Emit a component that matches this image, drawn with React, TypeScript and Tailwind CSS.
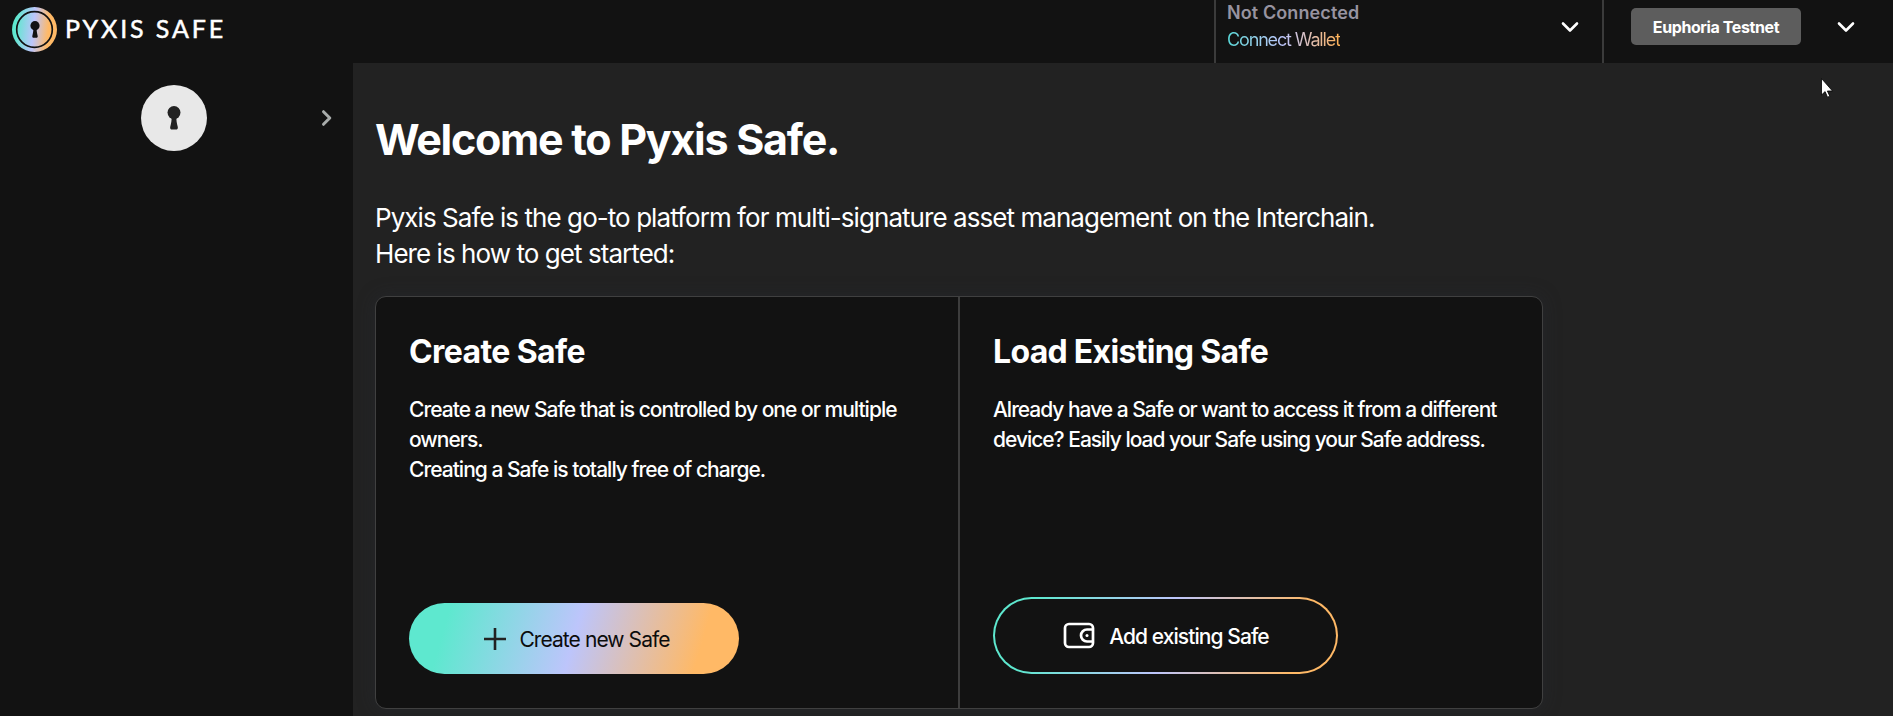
function Keyhole({ className }: { className: string }) {
  return (
    <svg viewBox="0 0 14 24" className={className} fill="currentColor">
      <circle cx="7" cy="6.6" r="6.5" />
      <path d="M4.6 10h4.8c-.2 4.500.4 7 1.400 11 .3 1.600-.5 2.600-2 2.600H5.200c-1.500 0-2.300-1-2-2.600C4.200 17 4.800 14.500 4.600 10z" />
    </svg>
  );
}

function ChevronDown() {
  return (
    <svg viewBox="0 0 18 12" className="h-3 w-[18px] shrink-0" fill="none" stroke="#fff" strokeWidth="2.6" strokeLinecap="round" strokeLinejoin="round">
      <path d="M2 2.500l7 7L16 2.500" />
    </svg>
  );
}

function Logo() {
  return (
    <svg viewBox="0 0 46 46" className="size-[45px] shrink-0">
      <defs>
        <linearGradient id="logo" x1="0" y1="0" x2="1" y2="0.1">
          <stop offset="0.12" stopColor="#5ee8cf" />
          <stop offset="0.52" stopColor="#bdc5fb" />
          <stop offset="0.85" stopColor="#ffb966" />
        </linearGradient>
      </defs>
      <circle cx="23" cy="23" r="23" fill="url(#logo)" />
      <circle cx="23" cy="23" r="18.200" fill="none" stroke="#121212" strokeWidth="1.700" />
    </svg>
  );
}

function Header() {
  return (
    <header className="flex h-[63px] bg-[#121212]">
      <div className="flex min-w-0 flex-1 items-start pl-3 pt-[7px]">
        <div className="grid place-items-center *:col-start-1 *:row-start-1">
          <Logo />
          <Keyhole className="h-[17px] w-[10px] text-[#121212]" />
        </div>
        <span className="ml-2 mt-[6px] whitespace-nowrap font-[Lato] text-[25px] leading-[30px] tracking-[2.9px] [-webkit-text-stroke:0.5px_white]">PYXIS SAFE</span>
      </div>
      <div className="flex w-[388px] justify-between border-l-2 border-[#3b3b3b] pl-[11px] pr-[23px]">
        <div className="-mt-px whitespace-nowrap">
          <p className="text-[18px] font-semibold leading-[27px] tracking-[0.1px] text-[#9793a0]">Not Connected</p>
          <p className="w-fit bg-linear-to-r from-[#55d8d8] via-[#bdc5fb] to-[#ffb04f] bg-clip-text text-[18px] font-normal leading-[27px] tracking-[-1.150px] text-transparent">Connect Wallet</p>
        </div>
        <div className="pt-[21px]"><ChevronDown /></div>
      </div>
      <div className="flex w-[291px] items-start border-l-2 border-[#3b3b3b] pl-[27px] pt-2">
        <div className="flex h-[37px] w-[170px] items-center justify-center rounded-[5px] bg-[#5d5d5d] pt-px text-[16px] font-bold tracking-[-0.4px]">Euphoria Testnet</div>
        <div className="ml-[36px] mt-[13px]"><ChevronDown /></div>
      </div>
    </header>
  );
}

function WalletIcon() {
  return (
    <svg viewBox="0 0 32 28" className="h-7 w-8 shrink-0" fill="none" stroke="#fff" strokeWidth="2.700">
      <rect x="2" y="2" width="28" height="23" rx="4" />
      <path d="M30 7.500h-6a6 6 0 0 0 0 12h6" />
      <circle cx="24" cy="13.500" r="1.500" fill="#fff" stroke="none" />
    </svg>
  );
}

export default function App() {
  return (
    <div className="relative flex h-[716px] flex-col overflow-hidden bg-[#222] font-[Inter,sans-serif] text-white">
      <Header />
      <div className="flex min-h-0 flex-1">
        <aside className="flex w-[353px] shrink-0 items-start bg-[#121212] pl-[141px] pt-[22px]">
          <div className="flex size-[66px] items-center justify-center rounded-full bg-[#e8e8e8]">
            <Keyhole className="h-[24px] w-[14px] text-[#222]" />
          </div>
          <svg viewBox="0 0 12 18" className="ml-[113px] mt-[24px] h-[18px] w-3" fill="none" stroke="#a8acab" strokeWidth="3" strokeLinecap="round" strokeLinejoin="round">
            <path d="M3.500 2.700l6.300 6.300-6.300 6.300" />
          </svg>
        </aside>
        <main className="pl-[22px] pt-[47px]">
          <h1 className="whitespace-nowrap text-[43px] font-bold leading-[58px] tracking-[-1.28px]">Welcome to Pyxis Safe.</h1>
          <p className="mt-[32px] whitespace-nowrap text-[26px] leading-[36px] tracking-[-0.94px]">
            Pyxis Safe is the go-to platform for multi-signature asset management on the Interchain.
            <br />
            Here is how to get started:
          </p>
          <section className="mt-[24px] flex h-[413px] w-[1168px] rounded-[11px] border border-[#404040] bg-[#121212] shadow-[0_0_18px_rgba(40,46,54,0.4)]">
            <div className="flex w-[584px] flex-col items-start border-r-2 border-[#3d3d3d] pb-[34px] pl-[33px] pt-[31px]">
              <h2 className="text-[32px] font-bold leading-[48px] tracking-[-0.6px]">Create Safe</h2>
              <p className="mt-[19px] whitespace-nowrap text-[21px] font-medium leading-[30px] tracking-[-0.98px]">
                Create a new Safe that is controlled by one or multiple
                <br />
                owners.
                <br />
                Creating a Safe is totally free of charge.
              </p>
              <button className="mt-auto flex h-[71px] w-[330px] items-center justify-center gap-[13px] rounded-full bg-[linear-gradient(106deg,#5ee8cf_12%,#bdc5fb_50%,#ffb966_87%)] pl-[6px] text-[21px] tracking-[-0.92px] text-[#0c0c0c]">
                <svg viewBox="0 0 22 22" className="size-[22px]" fill="none" stroke="#222" strokeWidth="2.600">
                  <path d="M11 0v22M0 11h22" />
                </svg>
                <span className="pt-[3px]">Create new Safe</span>
              </button>
            </div>
            <div className="flex flex-1 flex-col items-start pb-[34px] pl-[33px] pt-[31px]">
              <h2 className="text-[32px] font-bold leading-[48px] tracking-[-0.7px]">Load Existing Safe</h2>
              <p className="mt-[19px] whitespace-nowrap text-[21px] font-medium leading-[30px] tracking-[-1.020px]">
                Already have a Safe or want to access it from a different
                <br />
                device? Easily load your Safe using your Safe address.
              </p>
              <div className="mt-auto rounded-full bg-[linear-gradient(106deg,#5ee8cf_12%,#bdc5fb_50%,#ffb966_87%)] p-[2px]">
                <button className="flex h-[73px] w-[341px] items-center justify-center gap-[14px] rounded-full bg-[#121212] pl-px text-[21px] font-medium tracking-[-0.93px]">
                  <WalletIcon />
                  <span className="pt-[3px]">Add existing Safe</span>
                </button>
              </div>
            </div>
          </section>
        </main>
      </div>
      <svg viewBox="0 0 12 20" className="absolute left-[1821px] top-[78px] h-5 w-3" fill="#fff" stroke="#000" strokeWidth="0.800">
        <path d="M.5.500v16.500l3.600-3.400 2.400 5.600 2.300-1-2.400-5.200h5.100z" />
      </svg>
    </div>
  );
}
